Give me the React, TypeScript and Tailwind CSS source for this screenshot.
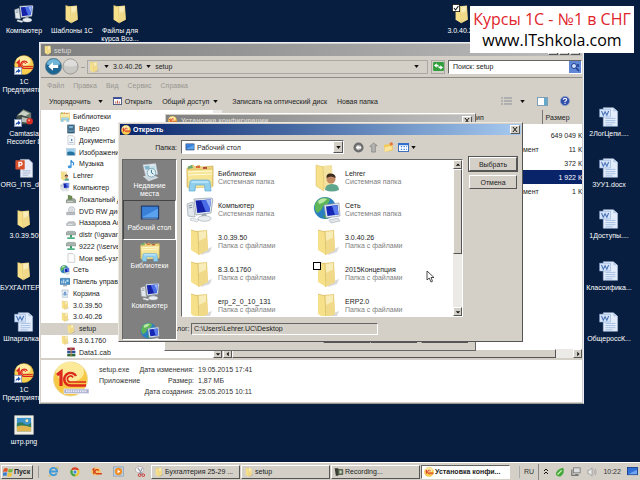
import clsx from 'clsx';
import type { ComponentType, ReactNode } from 'react';

type IconProps = { className?: string };
type Icon = ComponentType<IconProps>;

/* ---------- icons ---------- */

function FolderIcon({ className }: IconProps) {
  return (
    <svg viewBox="0 0 26 28" className={className} aria-hidden="true">
      <path d="M15 23 L25 19 L23 24 L14 27Z" fill="#000" opacity=".15" />
      <path d="M9 3 L20 2 L21 22 L11 25Z" fill="#e9cf7c" />
      <path d="M11 4 L19 3 L19 20 L12 24Z" fill="#f8edb8" />
      <path d="M4 2 L11 4 L12 27 L4 22Z" fill="#f6e08a" />
      <path d="M4 2 L11 4 L12 27" fill="none" stroke="#d6b95e" strokeWidth=".7" />
      <path d="M12 13 L20 9 L21 22 L12 27Z" fill="#f0d988" />
    </svg>
  );
}

function ComputerIcon({ className }: IconProps) {
  return (
    <svg viewBox="0 0 28 28" className={className} aria-hidden="true">
      <path d="M1 8 L7 6 L9 21 L2 20Z" fill="#e3e8ec" stroke="#9aa5ae" strokeWidth=".7" />
      <path d="M2.500 10 L6 9 M2.700 12 L6.300 11.300" stroke="#6c7985" strokeWidth=".8" />
      <path d="M8 3 L25 2 Q27 2 26.700 4 L25 17 L10 19Z" fill="#e4eaf1" stroke="#8a97a5" strokeWidth=".7" />
      <path d="M9.500 4.500 L25 3.500 L23.500 15.500 L11.300 17Z" fill="#1522a8" />
      <path d="M15 4.200 L25 3.500 L23.500 15.500 L20 16Z" fill="#4a6ce6" />
      <path d="M20 4 L25 3.500 L24 12Z" fill="#9ab4f6" />
      <path d="M16 18 L20 17.500 L21 21 L15 22Z" fill="#98a4b0" />
      <ellipse cx="18.500" cy="22.500" rx="6.500" ry="2.800" fill="#e9edf0" stroke="#9ba6af" strokeWidth=".6" />
      <path d="M5 22 L13 24 L11 26 L4 24Z" fill="#f0f2f4" stroke="#a5aeb6" strokeWidth=".5" />
    </svg>
  );
}

function NetworkIcon({ className }: IconProps) {
  return (
    <svg viewBox="0 0 28 28" className={className} aria-hidden="true">
      <circle cx="12" cy="12" r="11" fill="#2a7fc0" />
      <path d="M3 6 Q10 -1 17 3 Q16 9 10 10 Q9 15 4 17 Q0 12 3 6Z" fill="#5fb65a" />
      <path d="M5 5 Q9 1 14 3 Q11 7 6 8Z" fill="#b9e7a4" />
      <path d="M10 20 Q14 17 16 20 L14 23 Q11 23 10 20Z" fill="#3f9b53" />
      <path d="M11 9 L26 7 L27 20 L13 22Z" fill="#dce4ee" stroke="#8491a0" strokeWidth=".6" />
      <path d="M13 10.500 L24.500 9 L25.500 18.500 L14.500 20Z" fill="#1527b4" />
      <path d="M19 9.700 L24.500 9 L25.500 18.500 L22 19Z" fill="#5a7cec" />
      <path d="M16 24 L25 22 L27 25 L18 27Z" fill="#dfe5ea" stroke="#98a2ac" strokeWidth=".5" />
    </svg>
  );
}

function LibrariesIcon({ className }: IconProps) {
  return (
    <svg viewBox="0 0 28 28" className={className} aria-hidden="true">
      <path d="M1 4 L7 1 L9 3 L13 1 L15 3 L27 2 L27 22 L1 23Z" fill="#ecd27a" stroke="#c9a748" strokeWidth=".6" />
      <path d="M2 2.500 L6 1 L7 4 L2 5Z" fill="#6aa874" />
      <path d="M10 2 L14 2 L14 4 L10 4Z" fill="#d9663c" />
      <path d="M17 3 L21 3 L21 5 L17 5Z" fill="#b0493a" />
      <path d="M1 6 L27 5 L26 23 L2 24Z" fill="#f7e596" stroke="#d9bb5c" strokeWidth=".6" />
      <path d="M2 8 L26 7 M2 11 L26 10" stroke="#fff9d8" strokeWidth="1.200" />
      <path d="M3 27 L4 18 Q4 16 7 16 L21 16 Q24 16 24 18 L25 27 L19 27 L18.500 21 L9.500 21 L9 27Z" fill="#8fcfee" stroke="#5fa9d2" strokeWidth=".7" />
      <path d="M5.500 18 H22.500" stroke="#d2effb" strokeWidth="1.200" />
    </svg>
  );
}

function UserFolderIcon({ className }: IconProps) {
  return (
    <svg viewBox="0 0 28 28" className={className} aria-hidden="true">
      <path d="M8 2 L19 1 L20 24 L10 25Z" fill="#f4e3a0" />
      <path d="M3 1 L10 3 L11 27 L3 22Z" fill="#f6e08a" stroke="#d6b95e" strokeWidth=".5" />
      <path d="M12 26 Q12 20 19 20 Q26 20 26 26 Q19 29 12 26Z" fill="#5fa58d" />
      <circle cx="18" cy="15" r="4.500" fill="#c28a63" />
      <path d="M13.500 14 Q13 9 18 9.500 Q23 10 22.500 14 Q18 11 13.500 14Z" fill="#3c2c20" />
    </svg>
  );
}

function OneCIcon({ className }: IconProps) {
  return (
    <svg viewBox="0 0 36 36" className={className} aria-hidden="true">
      <circle cx="18" cy="18" r="17" fill="#f9cf52" stroke="#e6b33d" />
      <ellipse cx="17" cy="11" rx="13" ry="9" fill="#fff3b8" opacity=".8" />
      <path d="M5 15 L9 11 L9 24" fill="none" stroke="#d8231c" strokeWidth="3" />
      <path d="M24 14 A6.500 6.500 0 1 0 18 24 H34" fill="none" stroke="#d8231c" strokeWidth="2.500" />
      <path d="M21 16 A3.500 3.500 0 1 0 18 20.500 H34" fill="none" stroke="#d8231c" strokeWidth="1.800" />
    </svg>
  );
}

function OneCSetupIcon({ className }: IconProps) {
  return (
    <svg viewBox="0 0 36 36" className={className} aria-hidden="true">
      <circle cx="17.500" cy="18" r="17" fill="#f6c843" stroke="#eadb9f" />
      <ellipse cx="17" cy="11" rx="14" ry="10" fill="#fdf0a8" opacity=".85" />
      <path d="M4 14 L8 11 L8 25" fill="none" stroke="#dc2a1c" strokeWidth="3.200" />
      <path d="M23 15 A6.300 6.300 0 1 0 17.500 24.500 H33" fill="none" stroke="#dc2a1c" strokeWidth="2.400" />
      <path d="M20 16.500 A3 3 0 1 0 17.500 21 H33" fill="none" stroke="#dc2a1c" strokeWidth="1.700" />
      <path d="M11 28 H36 V32.500 H11Z" fill="#aab0cf" stroke="#e8eaf4" strokeWidth=".8" />
      <path d="M13 30.300 H34" stroke="#e9ebf8" strokeWidth="2" strokeDasharray="1.500 .8" />
    </svg>
  );
}

function ShortcutArrow() {
  return (
    <svg viewBox="0 0 10 10" className="absolute bottom-0 left-0 size-2" aria-hidden="true">
      <rect x=".5" y=".5" width="9" height="9" fill="#fff" stroke="#7d93b5" />
      <path d="M2 8 Q2 4 5 4 V2 L8.500 5 L5 7.500 V6 Q3 6 2 8Z" fill="#1c4fa8" />
    </svg>
  );
}

function OneCShortcutIcon({ className }: IconProps) {
  return (
    <span className={clsx('relative block', className)}>
      <OneCIcon className="size-full" />
      <ShortcutArrow />
    </span>
  );
}

function CamtasiaIcon({ className }: IconProps) {
  return (
    <span className={clsx('relative block', className)}>
      <svg viewBox="0 0 28 28" className="size-full" aria-hidden="true">
        <path d="M4 12 L13 3 L24 8 L24 20 L10 22Z" fill="#6d7a6d" />
        <path d="M6 11 L13 5 L22 9 L14 14Z" fill="#c9d0c4" />
        <path d="M3 14 L10 11 L21 15 L20 24 L6 24Z" fill="#3e4a45" />
        <path d="M11 14 L20 16 L19 22 L11 21Z" fill="#b7c0b8" />
        <circle cx="22" cy="20" r="4.500" fill="#d52f23" />
        <circle cx="21" cy="18.500" r="1.500" fill="#f59a8e" />
      </svg>
      <ShortcutArrow />
    </span>
  );
}

function WordIcon({ className }: IconProps) {
  return (
    <svg viewBox="0 0 28 28" className={className} aria-hidden="true">
      <path d="M6 1 H20 L26 6 V27 H6Z" fill="#e3edfb" stroke="#a9bedb" strokeWidth=".8" />
      <path d="M20 1 V6 H26Z" fill="#b9cde8" />
      <path d="M9 16 H23 M9 19 H23 M9 22 H23 M9 25 H19" stroke="#9db9e2" strokeWidth="1.200" />
      <rect x="1" y="3" width="15" height="11" fill="#d5e4f8" stroke="#8dabd8" strokeWidth=".8" />
      <path d="M3.500 5.500 L6 11.500 L8.500 6.500 L11 11.500 L13.500 5.500" fill="none" stroke="#4a74b8" strokeWidth="1.500" />
    </svg>
  );
}

function SlidesIcon({ className }: IconProps) {
  return (
    <svg viewBox="0 0 28 28" className={className} aria-hidden="true">
      <path d="M9 2 H21 L26 7 V27 H9Z" fill="#e6ecf8" stroke="#b4bfd0" strokeWidth=".8" />
      <path d="M12 18 H23 M12 21 H23 M12 24 H20" stroke="#9db0cd" strokeWidth="1.200" />
      <rect x="2" y="3" width="13" height="13" rx="1" fill="#d8502c" />
      <path d="M7 13 V6 H10 Q12.500 8 10 10 H7" fill="none" stroke="#fff" strokeWidth="1.800" />
    </svg>
  );
}

function ImageFileIcon({ className }: IconProps) {
  return (
    <svg viewBox="0 0 28 28" className={className} aria-hidden="true">
      <rect x="1" y="1" width="26" height="26" fill="#f3f1ea" stroke="#c5c2b6" />
      <rect x="4" y="4" width="20" height="19" fill="#3f93cc" />
      <path d="M4 12 Q9 8 14 12 T24 11 V18 H4Z" fill="#2f7c60" />
      <path d="M4 16 Q12 13 24 17 V23 H4Z" fill="#e0b653" />
      <circle cx="18" cy="8" r="2" fill="#f4e9a2" />
    </svg>
  );
}

function CheckedFolderIcon({ className }: IconProps) {
  return (
    <span className={clsx('relative block', className)}>
      <FolderIcon className="size-full" />
      <svg viewBox="0 0 10 10" className="absolute left-0 top-0 size-2" aria-hidden="true">
        <rect x=".5" y=".5" width="9" height="9" fill="#fff" stroke="#111" />
        <path d="M2.500 5 L4.500 7.500 L8 2.500" fill="none" stroke="#111" strokeWidth="1.300" />
      </svg>
    </span>
  );
}

function VideoIcon({ className }: IconProps) {
  return (
    <svg viewBox="0 0 16 16" className={className} aria-hidden="true">
      <rect x="2" y="1" width="12" height="14" fill="#2e5572" />
      <path d="M3.500 2 V15 M12.500 2 V15" stroke="#d9e6ef" strokeWidth="1" strokeDasharray="1 1" />
      <rect x="5" y="3" width="6" height="4" fill="#7fb4d2" />
      <rect x="5" y="9" width="6" height="4" fill="#5d8ea8" />
    </svg>
  );
}

function PageIcon({ className }: IconProps) {
  return (
    <svg viewBox="0 0 16 16" className={className} aria-hidden="true">
      <path d="M3 1 H11 L14 4 V15 H3Z" fill="#f4f8fb" stroke="#a4aeb8" strokeWidth=".8" />
      <path d="M8 6 L11 8 L8 10Z" fill="#4b78a8" />
      <path d="M5 12 H12" stroke="#8aa3bd" />
    </svg>
  );
}

function BlankPageIcon({ className }: IconProps) {
  return (
    <svg viewBox="0 0 16 16" className={className} aria-hidden="true">
      <path d="M3 1 H11 L14 4 V15 H3Z" fill="#fcfcfc" stroke="#a8a8a8" strokeWidth=".8" />
    </svg>
  );
}

function PictureIcon({ className }: IconProps) {
  return (
    <svg viewBox="0 0 16 16" className={className} aria-hidden="true">
      <rect x="1" y="2" width="14" height="12" fill="#dfeaf3" stroke="#9fb4c6" strokeWidth=".7" />
      <rect x="2" y="3" width="12" height="6" fill="#9bd0ee" />
      <path d="M2 8 Q7 6 14 9 V13 H2Z" fill="#25729f" />
    </svg>
  );
}

function MusicIcon({ className }: IconProps) {
  return (
    <svg viewBox="0 0 16 16" className={className} aria-hidden="true">
      <path d="M8 12 V2 Q9 5 12 6 Q13 8 11 10" fill="none" stroke="#2b86cf" strokeWidth="1.800" />
      <ellipse cx="6" cy="12.500" rx="3.200" ry="2.400" fill="#3f9be0" />
    </svg>
  );
}

function DriveIcon({ className }: IconProps) {
  return (
    <svg viewBox="0 0 16 16" className={className} aria-hidden="true">
      <path d="M0 10 L4 7 H13 L16 10 V14 H0Z" fill="#9aa39a" stroke="#6b756c" strokeWidth=".6" />
      <path d="M3 1 L10 3 V9 H3Z" fill="#6d8a55" />
      <path d="M2 12 H11" stroke="#e6ebe6" />
    </svg>
  );
}

function DvdIcon({ className }: IconProps) {
  return (
    <svg viewBox="0 0 16 16" className={className} aria-hidden="true">
      <circle cx="9" cy="6" r="5" fill="#e5e8ec" stroke="#949ba3" strokeWidth=".8" />
      <circle cx="9" cy="6" r="1.500" fill="#fff" stroke="#949ba3" strokeWidth=".6" />
      <path d="M1 10 H14 V14 H1Z" fill="#b8bcc0" stroke="#7f868d" strokeWidth=".6" />
    </svg>
  );
}

function RemovableIcon({ className }: IconProps) {
  return (
    <svg viewBox="0 0 16 16" className={className} aria-hidden="true">
      <path d="M1 9 L4 6 H13 L15 9 V12 H1Z" fill="#c3c7ca" stroke="#84898e" strokeWidth=".7" />
      <path d="M3 10.500 H10" stroke="#f6f7f8" />
    </svg>
  );
}

function NetDriveIcon({ className }: IconProps) {
  return (
    <svg viewBox="0 0 16 16" className={className} aria-hidden="true">
      <path d="M0 4 L3 2 H13 L16 4 V8 H0Z" fill="#a9b3ae" stroke="#6f7b75" strokeWidth=".6" />
      <path d="M8 8 V12" stroke="#2e9a62" strokeWidth="3" />
      <path d="M2 13 H14" stroke="#3aa876" strokeWidth="2.500" />
    </svg>
  );
}

function ControlPanelIcon({ className }: IconProps) {
  return (
    <svg viewBox="0 0 16 16" className={className} aria-hidden="true">
      <rect x="0" y="2" width="16" height="10" rx="1" fill="#4c8fc6" stroke="#2d648f" strokeWidth=".7" />
      <path d="M3 10 V6 M6 10 V4 M9 10 V7" stroke="#dff0fb" strokeWidth="1.500" />
      <circle cx="12" cy="6" r="2" fill="#a9d9f3" />
      <path d="M5 14 H11" stroke="#6f8ba1" strokeWidth="1.500" />
    </svg>
  );
}

function RecycleIcon({ className }: IconProps) {
  return (
    <svg viewBox="0 0 16 16" className={className} aria-hidden="true">
      <path d="M3 3 H13 L12 15 H4Z" fill="#e4ecf3" stroke="#93a7b8" strokeWidth=".7" />
      <path d="M6 11 L8 6 L10 11Z" fill="none" stroke="#3d7dc3" strokeWidth="1.300" />
    </svg>
  );
}

function CabIcon({ className }: IconProps) {
  return (
    <svg viewBox="0 0 16 16" className={className} aria-hidden="true">
      <rect x="2" y="1" width="12" height="4" fill="#a12c4a" />
      <rect x="2" y="6" width="13" height="4" fill="#2b4f9c" />
      <rect x="2" y="11" width="13" height="4" fill="#2c6a3a" />
      <rect x="7" y="1" width="2" height="14" fill="#b58a52" />
    </svg>
  );
}

function DesktopIcon({ className }: IconProps) {
  return (
    <svg viewBox="0 0 24 20" className={className} aria-hidden="true">
      <rect x="1" y="1" width="22" height="17" rx="1" fill="#243f6e" />
      <rect x="2.500" y="2.500" width="19" height="13" fill="#3a80d8" />
      <path d="M2.500 15 L21.500 5 V15.500 H2.500Z" fill="#5aa3ee" />
      <path d="M3 17 H21" stroke="#8ea9cc" />
    </svg>
  );
}

function RecentIcon({ className }: IconProps) {
  return (
    <svg viewBox="0 0 28 28" className={className} aria-hidden="true">
      <path d="M4 4 L22 2 L25 17 L8 20Z" fill="#e2eaef" stroke="#a8b5bd" strokeWidth=".7" />
      <path d="M6 6 L13 5 L14 10 L8 11Z" fill="#7fb6cc" />
      <path d="M15 6 L21 5 L22 12 L16 12Z" fill="#bfe0ea" />
      <path d="M4 20 L18 17 L26 22 L12 27Z" fill="#cdd9df" />
      <circle cx="16" cy="15" r="6" fill="#e4f1f4" stroke="#5f93a6" />
      <path d="M16 11 V15 L19 17" fill="none" stroke="#2f748c" strokeWidth="1.300" />
    </svg>
  );
}

function CamcorderIcon({ className }: IconProps) {
  return (
    <svg viewBox="0 0 16 16" className={className} aria-hidden="true">
      <path d="M1 2 H7 V14 H3Z" fill="#3a3f34" />
      <path d="M7 4 H14 V12 H7Z" fill="#78886a" stroke="#2f3529" />
      <path d="M9 6 H12 V10 H9Z" fill="#c9d6b8" />
    </svg>
  );
}

function Caret({ className }: IconProps) {
  return (
    <svg viewBox="0 0 6 4" className={clsx('h-[3px] w-[5px] shrink-0', className)} aria-hidden="true">
      <path d="M0 0 H6 L3 4Z" fill="#111" />
    </svg>
  );
}

/* ---------- shared pieces ---------- */

const raised = 'border border-t-white border-l-white border-r-[#555] border-b-[#555] bg-[#d4d0c8]';
const sunken = 'border border-t-[#666] border-l-[#666] border-r-white border-b-white';

function CloseButton() {
  return (
    <button aria-label="Закрыть" className={clsx('flex h-[9px] w-[10px] items-center justify-center', raised)}>
      <svg viewBox="0 0 7 6" className="h-[5px] w-[6px]" aria-hidden="true">
        <path d="M1 0 L6 6 M6 0 L1 6" stroke="#111" strokeWidth="1.200" />
      </svg>
    </button>
  );
}

function ScrollArrow({ dir }: { dir: 'up' | 'down' | 'left' | 'right' }) {
  const paths = {
    up: 'M1 5 L4 2 L7 5Z',
    down: 'M1 3 L4 6 L7 3Z',
    left: 'M5 1 L2 4 L5 7Z',
    right: 'M3 1 L6 4 L3 7Z',
  };
  return (
    <button aria-label={dir} className={clsx('flex size-[9px] shrink-0 items-center justify-center', raised)}>
      <svg viewBox="0 0 8 8" className="size-[6px]" aria-hidden="true">
        <path d={paths[dir]} fill="#111" />
      </svg>
    </button>
  );
}

/* ---------- desktop ---------- */

type Shortcut = { label: string; icon: Icon; cell: string };

const shortcuts: Shortcut[] = [
  { label: 'Компьютер', icon: ComputerIcon, cell: 'col-start-1 row-start-1' },
  { label: 'Шаблоны 1С', icon: FolderIcon, cell: 'col-start-2 row-start-1' },
  { label: 'Файлы для курса Воз...', icon: FolderIcon, cell: 'col-start-3 row-start-1' },
  { label: '3.0.40.26', icon: CheckedFolderIcon, cell: 'col-start-5 row-start-1' },
  { label: '1С Предприятие', icon: OneCShortcutIcon, cell: 'col-start-1 row-start-2' },
  { label: 'Camtasia Recorder 8', icon: CamtasiaIcon, cell: 'col-start-1 row-start-3' },
  { label: 'ORG_ITS_disk', icon: SlidesIcon, cell: 'col-start-1 row-start-4' },
  { label: '3.0.39.50', icon: FolderIcon, cell: 'col-start-1 row-start-5' },
  { label: 'БУХГАЛТЕРИЯ', icon: FolderIcon, cell: 'col-start-1 row-start-6' },
  { label: 'Шпаргалка...', icon: WordIcon, cell: 'col-start-1 row-start-7' },
  { label: '1С Предприятие', icon: OneCShortcutIcon, cell: 'col-start-1 row-start-8' },
  { label: 'штр.png', icon: ImageFileIcon, cell: 'col-start-1 row-start-9' },
  { label: '2ЛогЦепи....', icon: WordIcon, cell: 'col-start-7 row-start-3' },
  { label: 'ЗУУ1.docx', icon: WordIcon, cell: 'col-start-7 row-start-4' },
  { label: '1Доступы....', icon: WordIcon, cell: 'col-start-7 row-start-5' },
  { label: 'Классифика...', icon: WordIcon, cell: 'col-start-7 row-start-6' },
  { label: 'ОбщероссК...', icon: WordIcon, cell: 'col-start-7 row-start-7' },
];

function DesktopIcons() {
  return (
    <div className="grid h-full grid-cols-[48px_48px_48px_1fr_48px_99px_48px_7px] grid-rows-9">
      {shortcuts.map(({ label, icon: Glyph, cell }) => (
        <button key={cell} className={clsx('flex min-w-0 flex-col items-center gap-[3px] pt-1 text-white', cell)}>
          <Glyph className="size-5 shrink-0" />
          <span className="w-12 text-center leading-2">{label}</span>
        </button>
      ))}
    </div>
  );
}

/* ---------- explorer window ---------- */

type TreeNode = { label: string; icon: Icon; level: 1 | 2; selected?: boolean };

const tree: TreeNode[] = [
  { label: 'Библиотеки', icon: LibrariesIcon, level: 1 },
  { label: 'Видео', icon: VideoIcon, level: 2 },
  { label: 'Документы', icon: PageIcon, level: 2 },
  { label: 'Изображения', icon: PictureIcon, level: 2 },
  { label: 'Музыка', icon: MusicIcon, level: 2 },
  { label: 'Lehrer', icon: UserFolderIcon, level: 1 },
  { label: 'Компьютер', icon: ComputerIcon, level: 1 },
  { label: 'Локальный диск (C:)', icon: DriveIcon, level: 2 },
  { label: 'DVD RW дисковод', icon: DvdIcon, level: 2 },
  { label: 'Назарова Анна', icon: RemovableIcon, level: 2 },
  { label: 'distr (\\\\gavana)', icon: NetDriveIcon, level: 2 },
  { label: '9222 (\\\\server)', icon: NetDriveIcon, level: 2 },
  { label: 'Мои веб-узлы', icon: BlankPageIcon, level: 2 },
  { label: 'Сеть', icon: NetworkIcon, level: 1 },
  { label: 'Панель управления', icon: ControlPanelIcon, level: 1 },
  { label: 'Корзина', icon: RecycleIcon, level: 1 },
  { label: '3.0.39.50', icon: FolderIcon, level: 1 },
  { label: '3.0.40.26', icon: FolderIcon, level: 1 },
  { label: 'setup', icon: FolderIcon, level: 2, selected: true },
  { label: '8.3.6.1760', icon: FolderIcon, level: 1 },
  { label: 'Data1.cab', icon: CabIcon, level: 2 },
];

const files = [
  { type: '', size: '649 049 К' },
  { type: 'мент', size: '11 К' },
  { type: '', size: '372 К' },
  { type: '', size: '1 922 К', selected: true },
  { type: 'мент', size: '1 К' },
];

function ExplorerHeader() {
  return (
    <>
      <div className="flex h-3 shrink-0 items-center gap-px bg-linear-to-r from-[#7f7f7f] to-[#bdbdbd] px-0.5 text-[#dcdcdc]">
        <FolderIcon className="size-[10px]" />
        <h1 className="flex-1">setup</h1>
        <button aria-label="Свернуть" className={clsx('h-[10px] w-[10px]', raised)} />
        <button aria-label="Развернуть" className={clsx('h-[10px] w-[10px]', raised)} />
        <CloseButton />
      </div>
      <div className="flex h-[22px] shrink-0 items-center border-b border-[#8e8c86] pl-1">
        <button aria-label="Назад">
          <svg viewBox="0 0 18 18" className="size-[17px]" aria-hidden="true">
            <circle cx="9" cy="9" r="8.500" fill="#1d6593" stroke="#5f7f94" />
            <path d="M2 7 A7 6 0 0 1 16 7 Q9 9 2 7Z" fill="#6fb5d8" />
            <path d="M3.500 9 L8.500 4.500 V7.500 H14 V10.500 H8.500 V13.500Z" fill="#fff" />
          </svg>
        </button>
        <button aria-label="Вперёд">
          <svg viewBox="0 0 18 18" className="size-[17px]" aria-hidden="true">
            <circle cx="9" cy="9" r="8" fill="#c9c8c5" stroke="#969591" />
            <path d="M2 8 A7 6.500 0 0 1 16 8 Q9 10 2 8Z" fill="#dedddb" />
          </svg>
        </button>
        <span className="w-2 text-center text-[#777]">–</span>
        <nav className="flex h-[14px] flex-1 items-center gap-1 border border-[#aaa8a2] pr-2">
          <FolderIcon className="size-3" />
          <Caret className="w-1" />
          <a href="#parent">3.0.40.26</a>
          <Caret className="w-1" />
          <a href="#setup">setup</a>
          <Caret className="ml-auto" />
        </nav>
        <button aria-label="Обновить" className="mx-[3px] flex size-[14px] items-center justify-center border border-[#aaa8a2]">
          <svg viewBox="0 0 12 10" className="h-[9px] w-[11px]" aria-hidden="true">
            <rect width="12" height="10" rx="1" fill="#2f9e3c" />
            <path d="M1 4 L4 1.500 V3 H6 V5 H4 V6.500Z M11 6 L8 3.500 V5 H6 V7 H8 V8.500Z" fill="#fff" />
          </svg>
        </button>
        <div className={clsx('flex h-[14px] w-[134px] items-center bg-white pl-1', sunken)}>
          <input aria-label="Поиск" defaultValue="Поиск: setup" className="min-w-0 flex-1 outline-none" />
          <button aria-label="Найти">
            <svg viewBox="0 0 12 12" className="size-3" aria-hidden="true">
              <rect width="12" height="12" fill="#5f87d6" />
              <circle cx="5" cy="5" r="2.500" fill="#cfe1fb" stroke="#1e3b8f" />
              <path d="M7 7 L10 10 M9 3 V6" stroke="#1e3b8f" strokeWidth="1.500" />
            </svg>
          </button>
        </div>
      </div>
      <div className="flex h-[15px] shrink-0 items-center gap-[9px] pl-[6px] text-[#989690]">
        {['Файл', 'Правка', 'Вид', 'Сервис', 'Справка'].map((item) => (
          <button key={item}>{item}</button>
        ))}
      </div>
      <div className="flex h-4 shrink-0 items-center whitespace-nowrap pl-2 pr-3">
        <button className="flex items-center gap-[7px]">
          Упорядочить <Caret />
        </button>
        <button className="ml-[10px] flex items-center gap-[3px]">
          <svg viewBox="0 0 10 9" className="h-2 w-[9px]" aria-hidden="true">
            <rect x=".5" y=".5" width="9" height="8" fill="#fff" stroke="#44507a" />
            <path d="M1 1.500 H9" stroke="#2f4aa0" strokeWidth="1.500" />
            <path d="M3 7.500 V5 M5 7.500 V4 M7 7.500 V5" stroke="#b14a3a" />
          </svg>
          Открыть
        </button>
        <button className="ml-[10px] flex items-center gap-1">
          Общий доступ <Caret />
        </button>
        <button className="ml-[14px]">Записать на оптический диск</button>
        <button className="ml-[10px]">Новая папка</button>
        <div className="ml-auto flex items-center gap-3">
          <button aria-label="Вид" className="flex items-center gap-2">
            <svg viewBox="0 0 11 8" className="h-2 w-[11px]" aria-hidden="true">
              <path d="M0 1 H2 M0 4 H2 M0 7 H2 M3 1 H11 M3 4 H11 M3 7 H11" stroke="#8b8f96" />
            </svg>
            <Caret />
          </button>
          <button aria-label="Область просмотра">
            <svg viewBox="0 0 11 9" className="h-[9px] w-[11px]" aria-hidden="true">
              <rect x=".5" y=".5" width="10" height="8" fill="#fff" stroke="#7f9fb8" />
              <rect x="7" y="1" width="3" height="7" fill="#63a9c9" />
            </svg>
          </button>
          <button aria-label="Справка">
            <svg viewBox="0 0 12 12" className="size-[10px]" aria-hidden="true">
              <circle cx="6" cy="6" r="5.500" fill="#2f4fa8" stroke="#8b9cc8" />
              <path d="M4 4.500 Q4 2.800 6 2.800 Q8 2.800 8 4.500 Q8 5.500 6 6.500 V7.500 M6 8.500 V9.700" fill="none" stroke="#fff" strokeWidth="1.300" />
            </svg>
          </button>
        </div>
      </div>
    </>
  );
}

function ExplorerWindow() {
  return (
    <section className="absolute left-[39px] top-[42px] flex h-[362px] w-[545px] flex-col border border-[#e8eefa] border-b-[#9a9892] bg-[#d4d0c8] p-px">
      <ExplorerHeader />
      <div className="flex min-h-0 flex-1 pt-px">
        <ul className="flex w-[172px] flex-col bg-white pt-px">
          {tree.map(({ label, icon: Glyph, level, selected }) => (
            <li
              key={label}
              className={clsx(
                'flex min-h-0 flex-1 items-center gap-[3px] whitespace-nowrap',
                level === 1 ? 'pl-[19px]' : 'pl-[25px]',
                selected && 'bg-[#d4d0c8]',
              )}
            >
              <Glyph className="size-[10px] shrink-0" />
              {label}
            </li>
          ))}
        </ul>
        <div className="flex w-[9px] flex-col justify-end bg-[#eceae6]">
          <ScrollArrow dir="down" />
        </div>
        <div className="ml-px flex min-w-0 flex-1 flex-col bg-white">
          <table className="w-full table-fixed border-collapse">
            <thead>
              <tr className="h-[14px] bg-[#d4d0c8] text-left">
                <th className="font-normal" />
                <th className="w-[68px] border-r border-[#777] pl-0.5 font-normal">ип</th>
                <th className="w-10 pl-[3px] font-normal">Размер</th>
              </tr>
            </thead>
            <tbody className="before:block before:h-1">
              {files.map(({ type, size, selected }) => (
                <tr key={size} className={clsx('h-[14px]', selected && 'bg-[#0a246a] text-white')}>
                  <td />
                  <td className="pl-[49px]">{type}</td>
                  <td className="text-right whitespace-nowrap">{size}</td>
                </tr>
              ))}
            </tbody>
          </table>
          <div className="mt-auto flex bg-[#eceae6]">
            <ScrollArrow dir="left" />
            <div className={clsx('h-[9px] w-[324px]', raised)} />
            <div className="ml-auto">
              <ScrollArrow dir="right" />
            </div>
          </div>
        </div>
      </div>
      <footer className="mt-0.5 flex h-[42px] shrink-0 items-start gap-[10px] bg-white pl-3">
        <OneCSetupIcon className="mt-px size-9 shrink-0" />
        <dl className="mt-1 grid grid-cols-[38px_53px_auto] gap-x-1 leading-[11px] whitespace-nowrap text-[#333]">
          <dt>setup.exe</dt>
          <dt className="flex justify-end">Дата изменения:</dt>
          <dd>19.05.2015 17:41</dd>
          <dt>Приложение</dt>
          <dt className="flex justify-end">Размер:</dt>
          <dd>1,87 МБ</dd>
          <dt className="col-start-2 flex justify-end">Дата создания:</dt>
          <dd>25.05.2015 10:11</dd>
        </dl>
      </footer>
    </section>
  );
}

/* ---------- installer window, mostly covered by the dialog ---------- */

function InstallerWindow() {
  return (
    <section className="absolute left-[164px] top-[113px] flex h-[238px] w-[312px] flex-col border border-white border-r-[#666] border-b-[#666] bg-[#d4d0c8] p-px">
      <div className="flex h-[11px] items-center gap-1 bg-linear-to-r from-[#808080] to-[#c0c0c0] px-0.5 font-bold text-[#d4d0c8]">
        <OneCIcon className="size-[9px]" />
        <h2 className="flex-1">Установка конфигурации</h2>
        <CloseButton />
      </div>
      <div className="mt-auto mb-[6px] flex justify-end gap-1 pr-[6px]">
        <button aria-label="Назад" className={clsx('h-[14px] w-[47px]', raised)} />
        <button aria-label="Далее" className={clsx('-ml-1 h-[14px] w-[47px]', raised)} />
        <button aria-label="Отмена" className={clsx('h-[14px] w-[47px]', raised)} />
      </div>
    </section>
  );
}

/* ---------- open dialog ---------- */

type Place = { name: string; caption?: string; icon: Icon; active?: boolean };

const places: Place[] = [
  { name: 'recent', caption: 'Недавние места', icon: RecentIcon },
  { name: 'desktop', caption: 'Рабочий стол', icon: DesktopIcon, active: true },
  { name: 'libraries', caption: 'Библиотеки', icon: LibrariesIcon },
  { name: 'computer', caption: 'Компьютер', icon: ComputerIcon },
  { name: 'network', icon: NetworkIcon },
];

type Entry = { name: string; kind: string; icon: Icon; box?: boolean };

const entries: Entry[] = [
  { name: 'Библиотеки', kind: 'Системная папка', icon: LibrariesIcon },
  { name: 'Lehrer', kind: 'Системная папка', icon: UserFolderIcon },
  { name: 'Компьютер', kind: 'Системная папка', icon: ComputerIcon },
  { name: 'Сеть', kind: 'Системная папка', icon: NetworkIcon },
  { name: '3.0.39.50', kind: 'Папка с файлами', icon: FolderIcon },
  { name: '3.0.40.26', kind: 'Папка с файлами', icon: FolderIcon },
  { name: '8.3.6.1760', kind: 'Папка с файлами', icon: FolderIcon },
  { name: '2015Концепция', kind: 'Папка с файлами', icon: FolderIcon, box: true },
  { name: 'erp_2_0_10_131', kind: 'Папка с файлами', icon: FolderIcon },
  { name: 'ERP2.0', kind: 'Папка с файлами', icon: FolderIcon },
];

function FolderToolbar() {
  return (
    <div className="ml-[9px] flex items-center gap-1">
      <button aria-label="Назад">
        <svg viewBox="0 0 12 12" className="size-[11px]" aria-hidden="true">
          <circle cx="6" cy="6" r="5.500" fill="#6c6c6c" />
          <circle cx="6" cy="6" r="3" fill="#a8a8a8" />
          <path d="M3 6 L6 3.500 V5 H9 V7 H6 V8.500Z" fill="#fff" />
        </svg>
      </button>
      <button aria-label="На уровень вверх">
        <svg viewBox="0 0 12 12" className="size-[11px]" aria-hidden="true">
          <path d="M4 11 V5 H2 L6 1 L10 4 H8 V11Z" fill="#b4b4b2" stroke="#777" strokeWidth=".7" />
        </svg>
      </button>
      <button aria-label="Создать папку">
        <svg viewBox="0 0 12 12" className="size-[11px]" aria-hidden="true">
          <path d="M1 3 L10 2 L11 9 L2 11Z" fill="#f2c95c" />
          <path d="M2 6 L9 4 L10 8 L2 11Z" fill="#fbe59a" />
          <path d="M7 1 L10 0 L11 3 L8 4Z" fill="#e8763a" />
        </svg>
      </button>
      <button aria-label="Вид" className="flex items-center gap-0.5">
        <svg viewBox="0 0 12 10" className="h-[9px] w-[11px]" aria-hidden="true">
          <rect x=".5" y=".5" width="11" height="9" fill="#fff" stroke="#2b62b4" />
          <path d="M0 1.500 H12" stroke="#2f6fd0" strokeWidth="2" />
          <path d="M3 4 H4.500 M6 4 H7.500 M9 4 H10 M3 7 H4.500 M6 7 H7.500 M9 7 H10" stroke="#3f86e0" strokeWidth="1.500" />
        </svg>
        <Caret className="w-1" />
      </button>
    </div>
  );
}

function DialogButton({ children, main }: { children: ReactNode; main?: boolean }) {
  return <button className={clsx('h-[14px] w-12', raised, main && 'outline outline-[#555]')}>{children}</button>;
}

function OpenDialog() {
  return (
    <section
      role="dialog"
      aria-label="Открыть"
      className="absolute left-[118px] top-[122px] flex h-[220px] w-[405px] flex-col border border-[#ece9e2] border-r-[#555] border-b-[#555] bg-[#d4d0c8] p-px"
    >
      <div className="flex h-[11px] shrink-0 items-center gap-0.5 bg-linear-to-r from-[#0a246a] to-[#a6caf0] px-px font-bold text-white">
        <OneCIcon className="size-[10px]" />
        <h2 className="flex-1">Открыть</h2>
        <CloseButton />
      </div>
      <div className="flex h-6 shrink-0 items-center">
        <label htmlFor="folder" className="w-[61px] pr-1 text-right">
          Папка:
        </label>
        <div className={clsx('flex h-[14px] w-[163px] items-center bg-white pl-[3px]', sunken)}>
          <DesktopIcon className="h-2 w-[10px] shrink-0" />
          <select id="folder" className="min-w-0 flex-1 appearance-none pl-0.5 outline-none">
            <option>Рабочий стол</option>
          </select>
          <span className={clsx('flex h-3 w-[10px] items-center justify-center', raised)}>
            <Caret />
          </span>
        </div>
        <FolderToolbar />
      </div>
      <div className="flex min-h-0 flex-1">
        <nav className={clsx('ml-0.5 flex w-[55px] shrink-0 flex-col overflow-hidden bg-[#808080] text-white', sunken)}>
          {places.map(({ name, caption, icon: Glyph, active }) => (
            <button
              key={name}
              aria-label={caption ?? 'Сеть'}
              className={clsx(
                'flex h-10 w-full shrink-0 flex-col items-center border pt-px',
                active ? 'border-t-[#444] border-l-[#444] border-r-white border-b-white' : 'border-transparent',
              )}
            >
              <Glyph className={clsx('w-5 shrink-0', active ? 'mt-0.5 h-[18px]' : 'h-5')} />
              {caption && <span className={clsx('w-12 leading-2', active && 'mt-0.5 whitespace-nowrap')}>{caption}</span>}
            </button>
          ))}
        </nav>
        <div className="ml-1 flex min-w-0 flex-1 flex-col">
          <div className="flex min-h-0 flex-1">
            <div className={clsx('flex w-[282px] bg-white', sunken)}>
              <ul className="grid h-full min-h-0 flex-1 auto-rows-[32px] grid-cols-[127px_1fr] overflow-hidden pt-0.5">
                {entries.map(({ name, kind, icon: Glyph, box }) => (
                  <li key={name} className="relative flex items-center gap-1 pl-1">
                    <Glyph className="size-7 shrink-0" />
                    {box && (
                      <input
                        type="checkbox"
                        aria-label={name}
                        className="absolute left-1 top-1 size-2 appearance-none border border-black bg-white"
                      />
                    )}
                    <span className="leading-2">
                      {name}
                      <br />
                      <span className="text-[#808080]">{kind}</span>
                    </span>
                  </li>
                ))}
              </ul>
              <div className="flex w-[9px] flex-col bg-[#eceae6]">
                <ScrollArrow dir="up" />
                <div className={clsx('h-[85px]', raised)} />
                <div className="mt-auto">
                  <ScrollArrow dir="down" />
                </div>
              </div>
            </div>
            <div className="-mt-0.5 ml-[6px] flex flex-col gap-1">
              <DialogButton main>Выбрать</DialogButton>
              <DialogButton>Отмена</DialogButton>
            </div>
          </div>
          <div className="flex h-[23px] shrink-0 items-center">
            <label htmlFor="path" className="-ml-1 w-[14px]">
              лог:
            </label>
            <input
              id="path"
              readOnly
              defaultValue="C:\Users\Lehrer.UC\Desktop"
              className={clsx('h-3 w-[187px] pl-0.5 outline-none', sunken)}
            />
          </div>
        </div>
      </div>
    </section>
  );
}

/* ---------- taskbar ---------- */

const tasks = [
  { label: 'Бухгалтерия 25-29 ...', icon: FolderIcon },
  { label: 'setup', icon: FolderIcon },
  { label: 'Recording...', icon: CamcorderIcon },
  { label: 'Установка конфи...', icon: OneCIcon, active: true },
];

function Taskbar() {
  return (
    <footer className="flex h-[18px] shrink-0 items-center border-t border-white bg-[#d4d0c8] pl-px whitespace-nowrap">
      <button className={clsx('flex h-[14px] w-8 items-center gap-px pl-px font-bold', raised)}>
        <svg viewBox="0 0 12 12" className="size-[10px]" aria-hidden="true">
          <path d="M1 2 Q3 .500 6 2 L5 6 Q3 4.500 0 6Z" fill="#e1572c" />
          <path d="M7 2 Q9 3.500 12 2 L11 6 Q8 7 6 6Z" fill="#6fb43f" />
          <path d="M0 7 Q3 5.500 5 7 L4 11 Q2 9.500 0 11Z" fill="#3c7fd0" />
          <path d="M6 7 Q8 8 11 7 L10 11 Q7 12 5 11Z" fill="#f3c43a" />
        </svg>
        Пуск
      </button>
      <span className="ml-[5px] h-3 w-px bg-[#999]" />
      <div className="ml-[9px] flex w-[98px] items-center justify-between">
        <button aria-label="Internet Explorer">
          <svg viewBox="0 0 12 12" className="size-[11px]" aria-hidden="true">
            <path d="M9.500 8 A4 4 0 1 1 10 6 H3" fill="none" stroke="#3f9ad8" strokeWidth="2" />
            <path d="M1 10 Q0 12 3 10.500 M8 2 Q12 0 11 3.500" fill="none" stroke="#d8b54a" />
          </svg>
        </button>
        <button aria-label="Chrome">
          <svg viewBox="0 0 12 12" className="size-[10px]" aria-hidden="true">
            <circle cx="6" cy="6" r="5.500" fill="#e9c63a" />
            <path d="M1.200 3.200 A5.500 5.500 0 0 1 11 3.500 H6Z" fill="#d9402f" />
            <path d="M1.200 3.200 A5.500 5.500 0 0 0 5.500 11.500 L8 7Z" fill="#3da34d" />
            <circle cx="6" cy="6" r="2.400" fill="#4a86dc" stroke="#fff" strokeWidth=".8" />
          </svg>
        </button>
        <button aria-label="1С">
          <svg viewBox="0 0 12 10" className="h-[9px] w-[11px]" aria-hidden="true">
            <ellipse cx="5.500" cy="5" rx="5.500" ry="4.500" fill="#f4c56a" />
            <path d="M1.500 3 L3 2 V8 M8.500 4 A2.300 2.300 0 1 0 6.500 7.500 H12" fill="none" stroke="#d44320" strokeWidth="1.400" />
          </svg>
        </button>
        <button aria-label="Проигрыватель">
          <svg viewBox="0 0 12 12" className="size-[11px]" aria-hidden="true">
            <rect x=".5" y="1" width="11" height="10" fill="#b9d0e6" stroke="#8397ab" strokeWidth=".7" />
            <circle cx="6" cy="6" r="4" fill="#ef8f2a" />
            <path d="M5 4 L8 6 L5 8Z" fill="#fff" />
          </svg>
        </button>
        <button aria-label="Ножницы">
          <svg viewBox="0 0 12 12" className="size-[11px]" aria-hidden="true">
            <ellipse cx="5" cy="4" rx="4.500" ry="3.500" fill="#f3f3f3" stroke="#a99" strokeWidth=".7" />
            <path d="M3 2 L8 9 M8 2 L5 9" stroke="#8f99a8" strokeWidth="1.200" />
            <circle cx="9" cy="10" r="1.500" fill="none" stroke="#c82f2f" />
            <circle cx="5" cy="10" r="1.500" fill="none" stroke="#c82f2f" />
          </svg>
        </button>
      </div>
      <div className="ml-[5px] flex min-w-0 flex-1 gap-px">
        {tasks.map(({ label, icon: Glyph, active }) => (
          <button
            key={label}
            className={clsx(
              'flex h-[14px] w-[89px] items-center gap-px pl-0.5',
              active ? clsx('bg-white font-bold', sunken) : raised,
            )}
          >
            <Glyph className="size-[10px] shrink-0" />
            {label}
          </button>
        ))}
      </div>
      <span className="h-3 w-px bg-[#aaa]" />
      <span className="mx-1 text-[#333]">RU</span>
      <div className="flex h-4 w-[102px] items-center justify-between border-l border-[#888] pl-1 pr-0.5 text-[#333]">
        <button aria-label="Показать скрытые значки">
          <svg viewBox="0 0 6 8" className="h-2 w-[6px]" aria-hidden="true">
            <path d="M1 3 L3 1 L5 3 M1 6 L3 4 L5 6" fill="none" stroke="#111" />
          </svg>
        </button>
        <svg viewBox="0 0 12 12" className="size-[10px]" aria-hidden="true">
          <path d="M1 9 Q1 3 10 1 Q12 8 7 11 Q3 12 1 9Z" fill="#43a638" />
          <path d="M3 9 L8 4" stroke="#d5f2c4" strokeWidth="1.500" />
        </svg>
        <svg viewBox="0 0 12 12" className="size-[10px]" aria-hidden="true">
          <rect x="3" y="1" width="8" height="6" fill="#ddd" stroke="#777" />
          <path d="M1 3 V10 H9 M5 9 H9" fill="none" stroke="#777" strokeWidth="1.500" />
        </svg>
        <svg viewBox="0 0 12 12" className="size-[10px]" aria-hidden="true">
          <path d="M1 4 H3 L6 1 V11 L3 8 H1Z" fill="#eee" stroke="#888" strokeWidth=".8" />
          <path d="M8 3 Q10 6 8 9 M10 2 Q12 6 10 10" fill="none" stroke="#999" strokeWidth=".8" />
        </svg>
        <time>10:22</time>
        <svg viewBox="0 0 12 10" className="h-[9px] w-[11px]" aria-hidden="true">
          <rect x=".5" y=".5" width="11" height="8" fill="#2f6fd6" stroke="#174191" />
          <path d="M1 8 L11 3 V8Z" fill="#6fa5f0" />
        </svg>
      </div>
    </footer>
  );
}

/* ---------- page ---------- */

export default function App() {
  return (
    <div className="flex h-screen w-full flex-col overflow-hidden bg-[#071e40] font-['Liberation_Sans',sans-serif] text-[7px] leading-[9px] text-[#222]">
      <main className="relative min-h-0 flex-1">
        <DesktopIcons />
        <ExplorerWindow />
        <InstallerWindow />
        <OpenDialog />
        <aside className="absolute right-[6px] top-[6px] flex h-[47px] w-[164px] flex-col items-center justify-center bg-white font-['Comic_Sans_MS','Open_Sans',sans-serif] text-[16px] leading-[21px] whitespace-nowrap">
          <p className="text-[#e0242c]">Курсы 1С - №1 в СНГ</p>
          <p className="font-medium text-black">www.ITshkola.com</p>
        </aside>
        <svg viewBox="0 0 9 13" className="absolute left-[426px] top-[270px] h-[13px] w-[9px]" aria-hidden="true">
          <path d="M1 1 V10 L3.200 8 L5 12 L6.500 11.300 L5 7.500 H8Z" fill="#fff" stroke="#222" strokeWidth=".8" />
        </svg>
      </main>
      <Taskbar />
    </div>
  );
}
